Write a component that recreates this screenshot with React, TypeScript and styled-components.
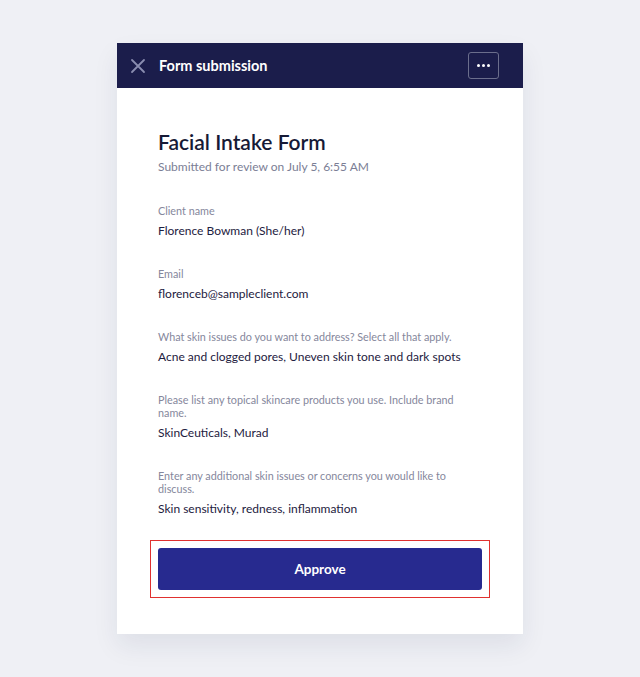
import * as React from "react";
import styled, { createGlobalStyle } from "styled-components";

const GlobalStyle = createGlobalStyle`
  html, body {
    margin: 0;
    padding: 0;
    background: #eff0f5;
    font-family: "Lato", "Noto Sans", sans-serif;
  }
`;

const Page = styled.div`
  min-height: 677px;
  display: flex;
  justify-content: center;
  padding-top: 43px;
  box-sizing: border-box;
`;

const Card = styled.div`
  width: 406px;
  height: 591px;
  background: #fff;
  box-shadow: 0 12px 24px rgba(30, 34, 80, 0.08);
  display: flex;
  flex-direction: column;
`;

const Header = styled.div`
  height: 45px;
  background: #1b1d4b;
  display: flex;
  align-items: center;
  padding: 0 24px 0 13px;
`;

const HeaderTitle = styled.div`
  flex: 1;
  margin-left: 13px;
  color: #fff;
  font-weight: 700;
  font-size: 14.5px;
`;

const MenuButton = styled.button`
  width: 31px;
  height: 27px;
  border: 1px solid #6b6e8c;
  border-radius: 3px;
  background: transparent;
  display: flex;
  align-items: center;
  justify-content: center;
  gap: 2px;
  padding: 0;
`;

const Dot = styled.span`
  width: 3px;
  height: 3px;
  border-radius: 50%;
  background: #fff;
`;

const Body = styled.div`
  padding: 41px 41px 0 41px;
`;

const Title = styled.h1`
  margin: 0;
  font-size: 21px;
  font-weight: 600;
  color: #161a36;
  line-height: 26px;
`;

const Subtitle = styled.div`
  margin-top: 4px;
  font-size: 12px;
  color: #7b7e95;
`;

const Fields = styled.div`
  margin-top: 30px;
  display: flex;
  flex-direction: column;
  gap: 28px;
`;

const Field = styled.div`
  display: flex;
  flex-direction: column;
`;

const Label = styled.div`
  font-size: 10.8px;
  line-height: 13px;
  color: #85879c;
  margin-bottom: 6px;
`;

const Value = styled.div`
  font-size: 12px;
  line-height: 16px;
  color: #1d2040;
`;

const Highlight = styled.div`
  margin: 23px -8px 0;
  border: 1.5px solid #e0312f;
  padding: 7px;
`;

const ApproveButton = styled.button`
  width: 100%;
  height: 42px;
  border: none;
  border-radius: 3px;
  background: #272a8f;
  color: #fff;
  font-family: inherit;
  font-weight: 700;
  font-size: 13.5px;
`;

const fields = [
  { label: "Client name", value: "Florence Bowman (She/her)" },
  { label: "Email", value: "florenceb@sampleclient.com" },
  {
    label: "What skin issues do you want to address? Select all that apply.",
    value: "Acne and clogged pores, Uneven skin tone and dark spots",
  },
  {
    label: "Please list any topical skincare products you use. Include brand name.",
    value: "SkinCeuticals, Murad",
  },
  {
    label: "Enter any additional skin issues or concerns you would like to discuss.",
    value: "Skin sensitivity, redness, inflammation",
  },
];

const App: React.FC = () => (
  <Page>
    <GlobalStyle />
    <Card>
      <Header>
        <svg width="16" height="16" viewBox="0 0 16 16">
          <path d="M2 2 L14 14 M14 2 L2 14" stroke="#8a8db0" strokeWidth="1.8" strokeLinecap="round" />
        </svg>
        <HeaderTitle>Form submission</HeaderTitle>
        <MenuButton>
          <Dot />
          <Dot />
          <Dot />
        </MenuButton>
      </Header>
      <Body>
        <Title>Facial Intake Form</Title>
        <Subtitle>Submitted for review on July 5, 6:55 AM</Subtitle>
        <Fields>
          {fields.map((f) => (
            <Field key={f.label}>
              <Label>{f.label}</Label>
              <Value>{f.value}</Value>
            </Field>
          ))}
        </Fields>
        <Highlight>
          <ApproveButton>Approve</ApproveButton>
        </Highlight>
      </Body>
    </Card>
  </Page>
);

export default App;
